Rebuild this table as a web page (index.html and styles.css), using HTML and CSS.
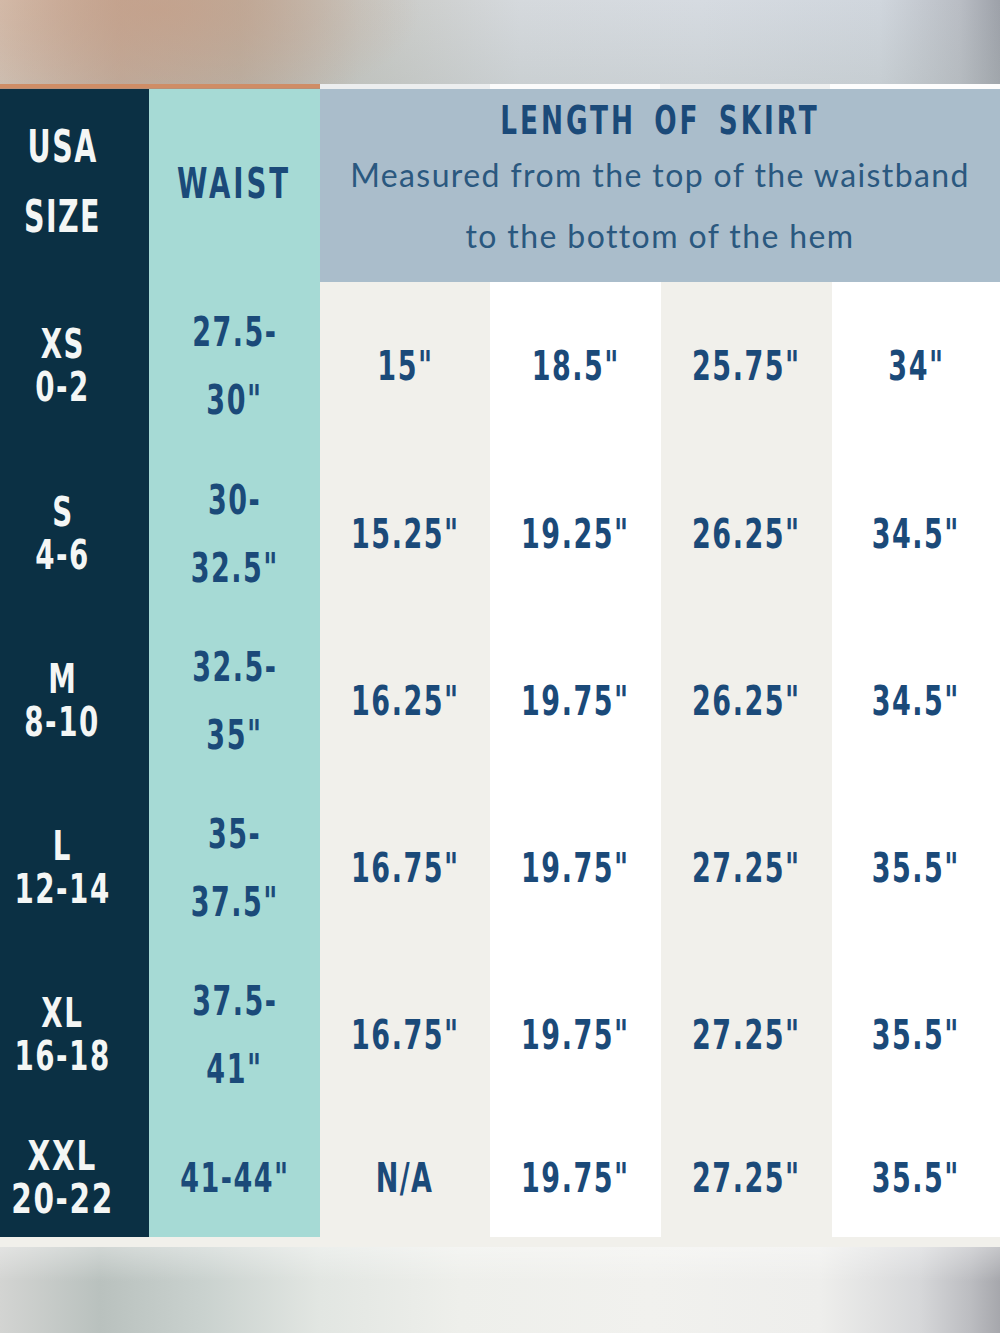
FILE: index.html
```html
<!DOCTYPE html>
<html lang="en">
<head>
<meta charset="utf-8">
<title>Skirt Size Chart</title>
<link rel="stylesheet" href="styles.css">
</head>
<body>
<div class="page">
  <div class="blur blur-top"></div>
  <div class="edge">
    <div class="edge-orange"></div>
    <div class="edge-light"></div>
  </div>
  <div class="chart">
    <div class="cell c-size head-size"><span>USA</span><span>SIZE</span></div>
    <div class="cell c-waist head-waist"><span>WAIST</span></div>
    <div class="cell head-length">
      <div class="length-title">LENGTH OF SKIRT</div>
      <div class="length-sub">Measured from the top of the waistband</div>
      <div class="length-sub">to the bottom of the hem</div>
    </div>

    <div class="cell c-size size"><span>XS</span><span>0-2</span></div>
    <div class="cell c-waist waist"><span>27.5-</span><span>30"</span></div>
    <div class="cell c-a num"><span>15"</span></div>
    <div class="cell c-b num"><span>18.5"</span></div>
    <div class="cell c-a num"><span>25.75"</span></div>
    <div class="cell c-b num"><span>34"</span></div>

    <div class="cell c-size size"><span>S</span><span>4-6</span></div>
    <div class="cell c-waist waist"><span>30-</span><span>32.5"</span></div>
    <div class="cell c-a num"><span>15.25"</span></div>
    <div class="cell c-b num"><span>19.25"</span></div>
    <div class="cell c-a num"><span>26.25"</span></div>
    <div class="cell c-b num"><span>34.5"</span></div>

    <div class="cell c-size size"><span>M</span><span>8-10</span></div>
    <div class="cell c-waist waist"><span>32.5-</span><span>35"</span></div>
    <div class="cell c-a num"><span>16.25"</span></div>
    <div class="cell c-b num"><span>19.75"</span></div>
    <div class="cell c-a num"><span>26.25"</span></div>
    <div class="cell c-b num"><span>34.5"</span></div>

    <div class="cell c-size size"><span>L</span><span>12-14</span></div>
    <div class="cell c-waist waist"><span>35-</span><span>37.5"</span></div>
    <div class="cell c-a num"><span>16.75"</span></div>
    <div class="cell c-b num"><span>19.75"</span></div>
    <div class="cell c-a num"><span>27.25"</span></div>
    <div class="cell c-b num"><span>35.5"</span></div>

    <div class="cell c-size size"><span>XL</span><span>16-18</span></div>
    <div class="cell c-waist waist"><span>37.5-</span><span>41"</span></div>
    <div class="cell c-a num"><span>16.75"</span></div>
    <div class="cell c-b num"><span>19.75"</span></div>
    <div class="cell c-a num"><span>27.25"</span></div>
    <div class="cell c-b num"><span>35.5"</span></div>

    <div class="cell c-size size size-xxl"><span>XXL</span><span>20-22</span></div>
    <div class="cell c-waist num"><span>41-44"</span></div>
    <div class="cell c-a num"><span>N/A</span></div>
    <div class="cell c-b num"><span>19.75"</span></div>
    <div class="cell c-a num"><span>27.25"</span></div>
    <div class="cell c-b num"><span>35.5"</span></div>
  </div>
  <div class="strip"></div>
  <div class="blur blur-bottom"></div>
</div>
</body>
</html>
```

FILE: styles.css
```css
html, body {
  margin: 0;
  padding: 0;
  background: #f1f0eb;
}

.page {
  width: 1000px;
  height: 1333px;
  display: flex;
  flex-direction: column;
  overflow: hidden;
}

.blur-top {
  height: 84px;
  background:
    radial-gradient(ellipse 260px 110px at 160px 10px, rgba(196, 160, 138, 0.75), rgba(196, 160, 138, 0) 100%),
    linear-gradient(180deg, rgba(255,255,255,0) 0%, rgba(170,180,178,0.25) 100%),
    linear-gradient(90deg, #d9c3b3 0%, #c4a794 12%, #bcae9f 24%, #c8c8c3 36%, #d5d9dd 52%, #d6dbe1 70%, #d0d6dd 88%, #b9bdc4 96%, #9da1a9 100%);
}

.edge {
  height: 5px;
  display: grid;
  grid-template-columns: 320px 1fr;
}
.edge-orange {
  background: #cf8d66;
  border-bottom: 1px solid #b98f76;
}
.edge-light {
  background: linear-gradient(90deg, #eceeef 0%, #eceeef 25%, #fbfbfb 25%, #fbfbfb 50%, #eff0f0 50%, #eff0f0 75%, #fdfdfd 75%);
}

.chart {
  display: grid;
  grid-template-columns: 149px 171px 170px 171px 171px 168px;
  grid-template-rows: 193px 168px 167px 167px 167px 167px 119px;
  font-family: "DejaVu Sans Condensed", "DejaVu Sans", sans-serif;
  font-weight: 700;
  color: #1b4a79;
}

.cell {
  display: flex;
  flex-direction: column;
  align-items: center;
  justify-content: center;
  text-align: center;
}

.cell > span {
  display: inline-block;
  white-space: nowrap;
  transform: scaleX(0.75);
}

.c-size {
  background: #0b3044;
  color: #f4f6f5;
  padding-right: 24px;
}
.c-waist { background: #a6dad5; }
.c-a { background: #f1f0eb; }
.c-b { background: #ffffff; }

.head-size {
  font-size: 44px;
  letter-spacing: 2px;
  line-height: 70px;
  padding-bottom: 8px;
}
.head-size > span { transform: scaleX(0.72); }

.head-waist {
  font-size: 42px;
  letter-spacing: 4px;
  padding-bottom: 4px;
}
.head-waist > span { transform: scaleX(0.73); }

.head-length {
  grid-column: 3 / 7;
  background: #aabdcb;
  justify-content: flex-start;
  padding-top: 9px;
}

.length-title {
  font-size: 39px;
  letter-spacing: 4px;
  word-spacing: 8px;
  line-height: 46px;
  transform: scaleX(0.75);
  white-space: nowrap;
}

.length-sub {
  font-family: "Lato", "Open Sans", sans-serif;
  font-weight: 400;
  font-size: 32px;
  color: #2a587f;
  line-height: 61px;
  letter-spacing: 1.4px;
  white-space: nowrap;
}

.size {
  font-size: 40px;
  letter-spacing: 2px;
  line-height: 43px;
}
.size > span { transform: scaleX(0.77); }

.size-xxl > span { transform: scaleX(0.82); }

.waist {
  font-size: 40px;
  letter-spacing: 2px;
  line-height: 68px;
}

.num {
  font-size: 40px;
  letter-spacing: 2px;
}

.strip {
  height: 10px;
  background: #f1f0eb;
}

.blur-bottom {
  flex: 1;
  background:
    linear-gradient(180deg, rgba(255,255,255,0.35) 0%, rgba(255,255,255,0) 40%),
    linear-gradient(90deg, #d3d4d2 0%, #b9c1be 10%, #c9d1ce 20%, #e2e6e2 32%, #eeefeb 46%, #f1f1ee 65%, #eeeeec 82%, #d6d7d9 92%, #bcbdc1 97%, #a6a7ac 100%);
}
```
